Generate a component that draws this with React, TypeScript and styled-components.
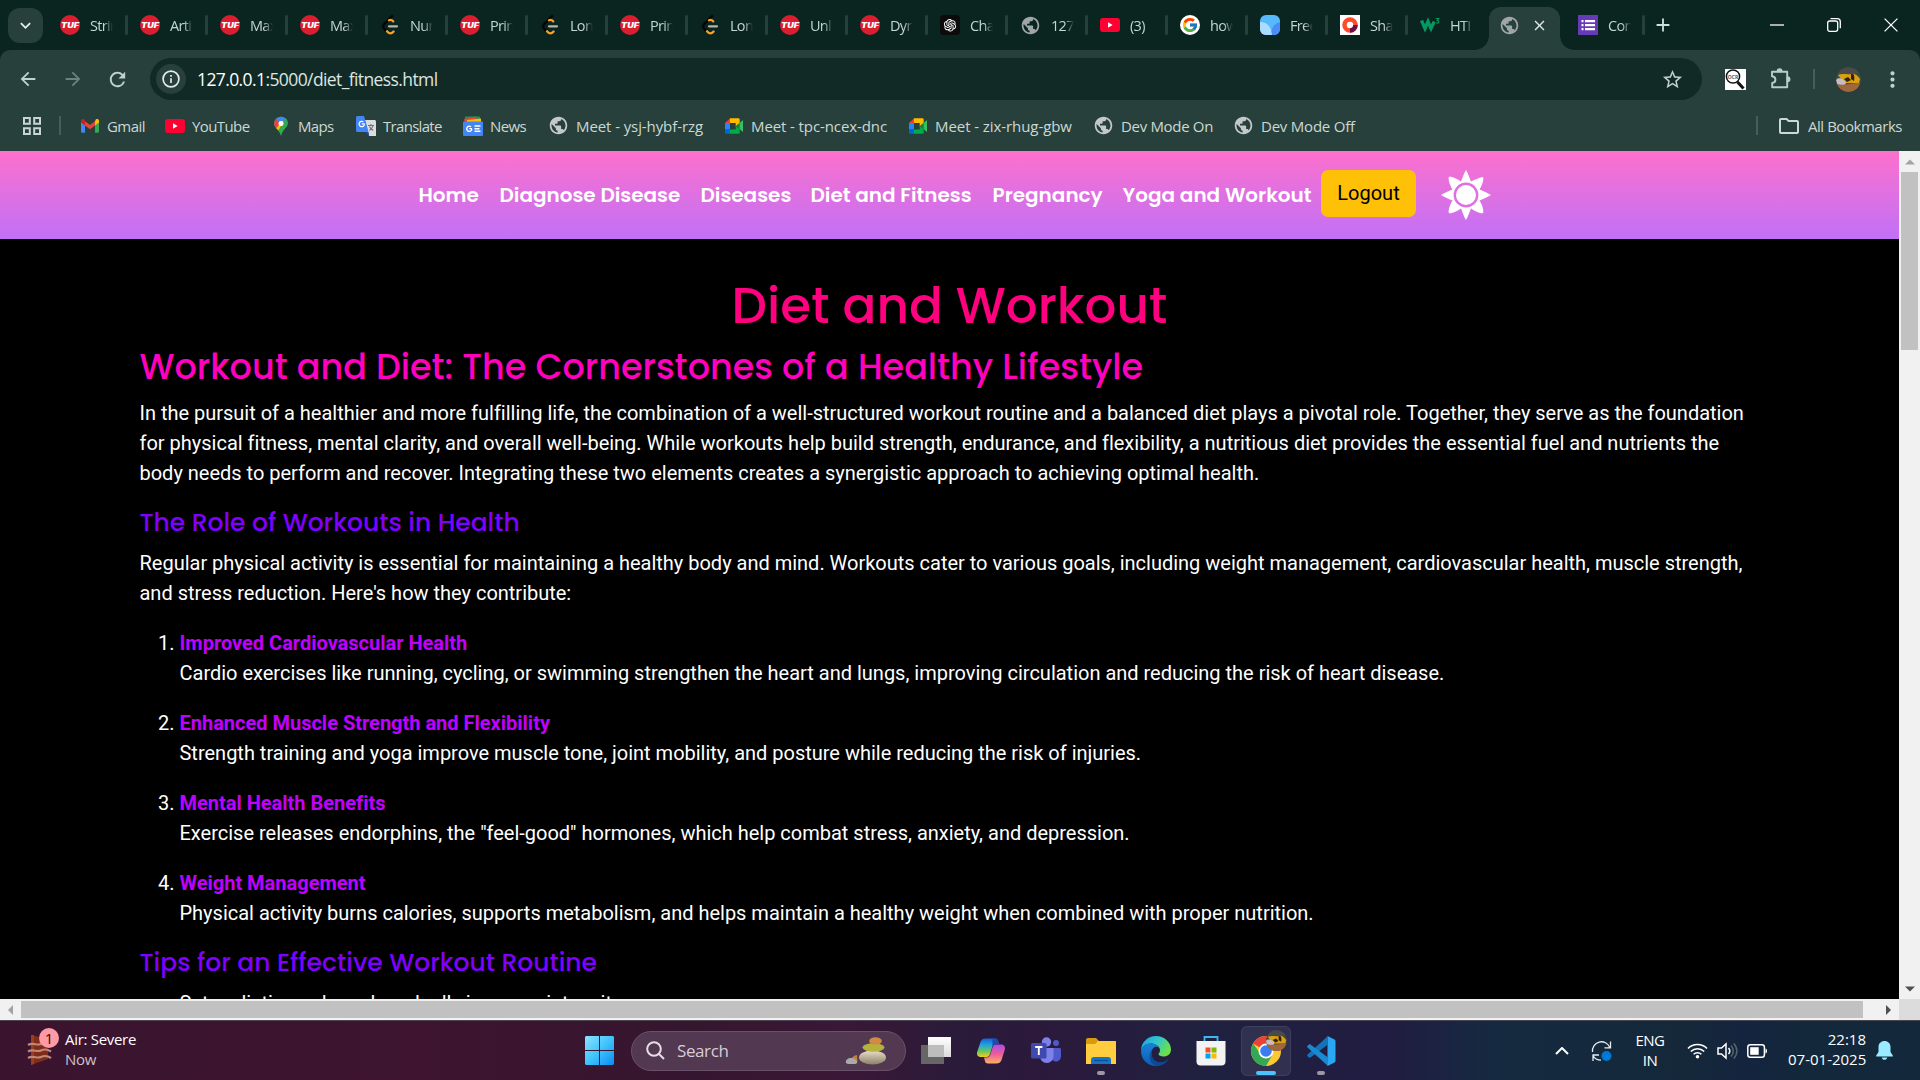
import React from "react";
import styled, { createGlobalStyle } from "styled-components";
import {
  MdPublic, MdArrowBack, MdArrowForward, MdRefresh, MdStarBorder, MdMoreVert,
  MdOutlineFolder, MdKeyboardArrowDown, MdClose, MdAdd,
} from "react-icons/md";
import { FcGoogle } from "react-icons/fc";
import { AiOutlineOpenAI } from "react-icons/ai";

const Global = createGlobalStyle`
  * { box-sizing: border-box; }
  html, body { margin: 0; padding: 0; background: #000; overflow: hidden; }
  svg { display: block; flex: none; }
`;

const ui = `"Segoe UI", "Open Sans", "Noto Sans", sans-serif`;
const display = `"Poppins", "Inter", sans-serif`;

const Screen = styled.div`
  width: 1920px;
  height: 1080px;
  display: flex;
  flex-direction: column;
  overflow: hidden;
  font-family: ${ui};
`;

/* ---------- tab strip ---------- */
const TabStrip = styled.div`
  height: 50px;
  flex: none;
  display: flex;
  background: #0a2420;
  padding-left: 8px;
`;
const TabSearch = styled.div`
  width: 35px;
  height: 35px;
  margin: 8px 3px 0 0;
  border-radius: 12px;
  background: #28403b;
  color: #e4efeb;
  display: flex;
  align-items: center;
  justify-content: center;
`;
const Tab = styled.div<{ $line?: boolean }>`
  width: 80px;
  height: 50px;
  padding-left: 14px;
  display: flex;
  align-items: center;
  gap: 10px;
  position: relative;
  color: #c3d6d0;
  &::after {
    content: "";
    display: ${(p) => (p.$line === false ? "none" : "block")};
    position: absolute;
    right: -2px;
    top: 15px;
    width: 3px;
    height: 20px;
    border-radius: 2px;
    background: #28403b;
  }
`;
const TabTitle = styled.span`
  width: 23px;
  overflow: hidden;
  white-space: nowrap;
  font-size: 14.5px;
  letter-spacing: -0.7px;
  mask-image: linear-gradient(90deg, #000 60%, transparent 100%);
`;
const ActiveTab = styled.div`
  width: 71px;
  height: 43px;
  margin: 7px 17px 0 3px;
  padding: 0 12px 7px 10px;
  display: flex;
  align-items: center;
  justify-content: space-between;
  border-radius: 12px 12px 0 0;
  background: #28403b;
  color: #dfe9e6;
  position: relative;
  &::before, &::after {
    content: "";
    position: absolute;
    bottom: 0;
    width: 14px;
    height: 14px;
  }
  &::before { left: -14px; background: radial-gradient(circle at 0 0, transparent 13.5px, #28403b 14px); }
  &::after { right: -14px; background: radial-gradient(circle at 100% 0, transparent 13.5px, #28403b 14px); }
`;
const LastTab = styled(Tab)`
  width: 66px;
  padding-left: 1px;
`;
const NewTab = styled.div`
  width: 40px;
  height: 50px;
  display: flex;
  align-items: center;
  justify-content: center;
  color: #cfe0db;
`;
const WindowButtons = styled.div`
  margin: 0 1px 0 auto;
  display: flex;
  height: 50px;
  align-items: center;
`;
const WindowButton = styled.div`
  width: 57px;
  display: flex;
  justify-content: center;
`;

/* ---------- toolbar ---------- */
const ToolbarBack = styled.div`
  background: #0a2420;
  flex: none;
`;
const Toolbar = styled.div`
  height: 101px;
  background: #28403b;
  border-radius: 10px 10px 0 0;
`;
const AddressRow = styled.div`
  height: 58px;
  padding: 0 5px 0 5px;
  display: flex;
  align-items: center;
`;
const NavButton = styled.div<{ $dim?: boolean }>`
  width: 45px;
  display: flex;
  justify-content: center;
  color: ${(p) => (p.$dim ? "#6c827c" : "#bdd3cc")};
`;
const Omnibox = styled.div`
  width: 1552px;
  height: 42px;
  margin-left: 10px;
  padding: 0 18px 0 6px;
  border-radius: 21px;
  background: #122a26;
  display: flex;
  align-items: center;
`;
const SiteInfo = styled.div`
  width: 30px;
  height: 30px;
  border-radius: 50%;
  background: #28403b;
  display: flex;
  align-items: center;
  justify-content: center;
`;
const Url = styled.div`
  flex: 1;
  padding-left: 11px;
  font-size: 17.5px;
  letter-spacing: -0.6px;
  color: #dbe6e3;
  b { font-weight: 400; color: #fff; }
`;
const Extensions = styled.div`
  margin: 0 20px 0 auto;
  display: flex;
  align-items: center;
  svg + svg { margin-left: 23px; }
`;
const ToolbarLine = styled.div<{ $h: number }>`
  width: 2px;
  height: ${(p) => p.$h}px;
  background: #465e58;
`;
const Avatar = styled.div`
  width: 25px;
  height: 25px;
  margin: 0 9px 0 21px;
  border-radius: 50%;
  overflow: hidden;
`;

const BookmarkRow = styled.div`
  height: 35px;
  display: flex;
  align-items: center;
  padding: 0 18px 0 23px;
  font-size: 15px;
  color: #cbd8d4;
`;
const BookmarkLine = styled(ToolbarLine)`
  margin: 0 19px 0 18px;
`;
const Bookmark = styled.div<{ $w?: number; $ls: number }>`
  ${(p) => (p.$w ? `width: ${p.$w}px;` : "")}
  display: flex;
  align-items: center;
  gap: 7px;
  line-height: 18px;
  white-space: nowrap;
  letter-spacing: ${(p) => p.$ls}px;
`;
const AllBookmarks = styled.div`
  margin-left: auto;
  display: flex;
  align-items: center;
`;

/* ---------- page ---------- */
const Viewport = styled.div`
  height: 869px;
  flex: none;
  display: grid;
  grid-template-columns: 1899px 21px;
  grid-template-rows: 848px 21px;
`;
const Page = styled.div`
  background: #000;
  color: #fff;
  overflow: hidden;
  font-family: "Roboto", sans-serif;
  font-size: 20px;
  line-height: 30px;
  letter-spacing: -0.007px;
`;
const Header = styled.header`
  height: 88px;
  padding: 0 0 0 409px;
  display: flex;
  align-items: center;
  background: linear-gradient(#fd70cd, #c170f7);
`;
const NavLink = styled.a<{ $w: number }>`
  width: ${(p) => p.$w}px;
  padding-left: 9.5px;
  font-family: ${display};
  font-weight: 600;
  font-size: 20px;
  white-space: nowrap;
  color: #fff;
`;
const Logout = styled.button`
  width: 95px;
  height: 47px;
  margin: 0 25px 3px 0;
  padding: 0 0 1px;
  border: 0;
  border-radius: 7px;
  background: #ffc107;
  color: #000;
  font: 400 20px "Roboto", sans-serif;
`;
const Content = styled.main`
  width: 1620px;
  margin: 0 auto;
  padding-top: 36.5px;
`;
const Title = styled.h1`
  margin: 0 0 10px;
  font: 500 50px/60px ${display};
  text-align: center;
  color: #ff007f;
`;
const SubTitle = styled.h2`
  margin: 0 0 10px;
  font: 500 35px/42px ${display};
  color: #ff00bf;
`;
const SectionTitle = styled.h3`
  margin: 0 0 10px;
  font: 500 25px/30px ${display};
  color: #7f00ff;
`;
const Paragraph = styled.p`
  margin: 0 0 20px;
`;
const Numbered = styled.ol`
  margin: 0;
  padding-left: 40px;
`;
const Bulleted = styled.ul`
  margin: 0;
  padding-left: 40px;
`;
const Item = styled.li`
  margin-bottom: 20px;
  strong { display: block; color: #bf00ff; font-weight: 700; }
`;

/* ---------- scrollbars ---------- */
const VScroll = styled.div`
  background: #f1f1f1;
  display: flex;
  flex-direction: column;
  align-items: center;
  justify-content: space-between;
`;
const HScroll = styled.div`
  background: #f1f1f1;
  display: flex;
  align-items: center;
  justify-content: space-between;
`;
const ArrowBox = styled.div`
  width: 21px;
  height: 21px;
  display: flex;
  align-items: center;
  justify-content: center;
`;
const VThumb = styled.div`
  width: 17px;
  height: 178px;
  margin-bottom: auto;
  background: #c1c1c1;
`;
const HThumb = styled.div`
  width: 1842px;
  height: 17px;
  margin-right: auto;
  background: #c1c1c1;
`;
const Corner = styled.div`
  background: #dcdcdc;
`;

/* ---------- taskbar ---------- */
const Taskbar = styled.div`
  height: 60px;
  flex: none;
  display: flex;
  align-items: center;
  padding: 0 27px 0 26px;
  border-top: 1px solid #4a4753;
  background: linear-gradient(90deg, #3a142f 0, #3e1430 22%, #35162f 36%, #3a1736 44%, #2a1b3a 50%, #2c193c 54%, #1f2140 63%, #211c42 72%, #152a40 78%, #14283a 88%, #14243f 91%, #13283a 94%);
  color: #fff;
  font-size: 15px;
`;
const Weather = styled.div`
  width: 555px;
  display: flex;
  align-items: center;
  gap: 13px;
  line-height: 20px;
  letter-spacing: -0.3px;
`;
const WeatherText = styled.div`
  padding-bottom: 3px;
`;
const WeatherIcon = styled.div`
  position: relative;
  width: 26px;
  height: 32px;
  margin-bottom: 2px;
`;
const Badge = styled.span`
  position: absolute;
  left: 13px;
  top: -6px;
  width: 20px;
  height: 20px;
  border-radius: 50%;
  background: #ff99a4;
  color: #1d0f12;
  text-align: center;
  line-height: 20px;
`;
const Muted = styled.div`
  color: #cfc0cb;
`;
const AppSlot = styled.div<{ $active?: boolean }>`
  width: 50px;
  height: 50px;
  margin-right: 5px;
  display: flex;
  align-items: center;
  justify-content: center;
  position: relative;
  border-radius: 6px;
  background: ${(p) => (p.$active ? "rgba(255,255,255,0.08)" : "transparent")};
  box-shadow: ${(p) => (p.$active ? "inset 0 0 0 1px rgba(255,255,255,0.07)" : "none")};
`;
const StartSlot = styled.div`
  width: 50px;
  display: flex;
  justify-content: flex-start;
  padding-left: 4px;
`;
const RunMark = styled.i<{ $wide?: boolean }>`
  position: absolute;
  bottom: 1px;
  left: 50%;
  width: ${(p) => (p.$wide ? 20 : 8)}px;
  height: 4px;
  border-radius: 2px;
  transform: translateX(-50%);
  background: ${(p) => (p.$wide ? "#4cc2ff" : "#9c98a8")};
`;
const SearchPill = styled.div`
  width: 275px;
  height: 40px;
  margin-right: 5px;
  padding: 0 18px 0 14px;
  display: flex;
  align-items: center;
  border-radius: 20px;
  background: #523850;
  border: 1px solid #6a5068;
  color: #d9ccd8;
  font-size: 17px;
  letter-spacing: -0.4px;
  span { flex: 1; padding-left: 12px; }
`;
const Tray = styled.div`
  margin-left: auto;
  display: flex;
  align-items: center;
  line-height: 20px;
`;
const TrayIcons = styled.div<{ $gap: number }>`
  display: flex;
  align-items: center;
  gap: ${(p) => p.$gap}px;
`;
const Language = styled.div`
  width: 40px;
  margin: 0 17px 2px 18px;
  text-align: center;
  letter-spacing: -0.5px;
`;
const Clock = styled.div`
  margin: 0 10px 3px 20px;
  text-align: right;
  width: 78px;
  white-space: nowrap;
`;

/* ---------- favicons ---------- */
const Tuf = () => (
  <svg width="20" height="20" viewBox="0 0 20 20">
    <circle cx="10" cy="10" r="10" fill="#d71f30" />
    <text x="10" y="12.6" textAnchor="middle" fontFamily="Inter, sans-serif" fontSize="7" fontWeight="900" fontStyle="italic" fill="#fff" textLength="18" lengthAdjust="spacingAndGlyphs">TUF</text>
  </svg>
);
const Leet = () => (
  <svg width="20" height="20" viewBox="0 0 20 20" fill="none" strokeWidth="2.3" strokeLinecap="round">
    <path d="M12 1.200 4 9.300c-1.300 1.300-1.300 2.900 0 4.200l2.300 2.400" stroke="#030303" />
    <path d="M9 5.200c1.700-.8 3-.4 4.300 1.200M7 16.300c2 2.600 4.500 2.600 6.600.2" stroke="#ffa116" />
    <path d="M9 11.300h8" stroke="#b3b3b3" />
  </svg>
);
const YouTube = () => (
  <svg width="20" height="20" viewBox="0 0 20 20">
    <rect x="0" y="3" width="20" height="14" rx="3" fill="#ff0033" />
    <path d="M8 7.200v5.600l4.600-2.800z" fill="#fff" />
  </svg>
);
const Gpt = () => (
  <svg width="20" height="20" viewBox="0 0 20 20">
    <rect width="20" height="20" rx="4" fill="#0b0b0b" />
    <g transform="translate(2 2)" color="#fff"><AiOutlineOpenAI size={16} /></g>
  </svg>
);
const GoogleIcon = () => (
  <svg width="20" height="20" viewBox="0 0 20 20">
    <circle cx="10" cy="10" r="10" fill="#fff" />
    <g transform="translate(1.500 1.500)"><FcGoogle size={17} /></g>
  </svg>
);
const BlueLeaf = () => (
  <svg width="20" height="20" viewBox="0 0 20 20">
    <rect width="20" height="20" rx="6" fill="#56b9fb" />
    <path d="M0 7c7 0 11 4 12 13H6a6 6 0 0 1-6-6z" fill="#a9dcff" />
    <path d="M11.500 16c1-5 4-8 8.500-9v7a6 6 0 0 1-6 6h-2z" fill="#4a8df6" />
  </svg>
);
const Share = () => (
  <svg width="20" height="20" viewBox="0 0 20 20">
    <path fill="#fff" d="M0 0h20v20H0z" />
    <circle cx="10" cy="10" r="5.500" fill="none" stroke="#ff4b2b" strokeWidth="4.500" />
    <path d="M10 15.500a5.500 5.500 0 0 0 5.500-5.500" fill="none" stroke="#6b1044" strokeWidth="4.500" />
  </svg>
);
const W3 = () => (
  <svg width="20" height="20" viewBox="0 0 20 20" fill="none" stroke="#059862">
    <path d="M1.500 5.500 5 13.500l3-7 3 7 3.200-7" strokeWidth="3.300" />
    <path d="M15.800 3.500h3l-1.600 2c2.600.2 2 3.200-.9 2.400" strokeWidth="1.200" />
  </svg>
);
const Forms = () => (
  <svg width="20" height="20" viewBox="0 0 20 20">
    <path fill="#673ab7" d="M0 0h20v20H0z" />
    <path d="M3.500 5h2v2.200h-2zm3.500 0h10v2.200H7zM3.500 9h2v2.200h-2zM7 9h10v2.200H7zm-3.500 4h2v2.200h-2zM7 13h10v2.200H7z" fill="#fff" />
  </svg>
);
const Gmail = () => (
  <svg width="20" height="20" viewBox="0 0 20 20">
    <path d="M1 5v10.500c0 .8.600 1.200 1.200 1.200H5V8z" fill="#4285f4" />
    <path d="M19 5v10.500c0 .8-.6 1.200-1.200 1.200H15V8z" fill="#34a853" />
    <path d="M15 5.500V9.500l4-3V5c0-2-2-2.500-3.300-1.500z" fill="#fbbc04" />
    <path d="M5 9.500V5.300l5 3.800 5-3.800v4.200l-5 3.800z" fill="#ea4335" />
    <path d="M1 5v1.500l4 3V4.300l-.7-.8C3 2.500 1 3 1 5z" fill="#c5221f" />
  </svg>
);
const MapPin = () => (
  <svg width="20" height="20" viewBox="0 0 20 20">
    <path d="M3.200 7.500a6.800 6.800 0 0 1 13.600 0c0 4-4.800 5.500-6.800 12.300C9 14.500 3.200 12 3.200 7.500z" fill="#34a853" />
    <path d="M10 .7a6.800 6.800 0 0 1 6 3.600L5.200 12C4 10.800 3.200 9.300 3.200 7.500A6.800 6.800 0 0 1 10 .7z" fill="#4285f4" />
    <path d="M5 3 10 7.200 5.300 12.300C4 10.800 3.200 9.300 3.200 7.500c0-1.900.6-3.300 1.800-4.500z" fill="#ea4335" />
    <path d="m5.200 12.200 6.600-7.700 2.300 6.200c-1.600 1.700-3.100 3.100-3.800 5.300-1.300-1.200-3.900-2.500-5.100-3.800z" fill="#fbbc04" />
    <path d="M14.300 2.200c3 2 3.600 6-.2 9C12 13 10.600 15 10 19.800c-.5-2.300-1.200-3.600-2.600-5.200z" fill="#34a853" />
    <circle cx="10" cy="7.400" r="2.500" fill="#fff" />
  </svg>
);
const TranslateIcon = () => (
  <svg width="20" height="20" viewBox="0 0 20 20">
    <path d="M9 4h9.500c.8 0 1.500.7 1.500 1.500V20h-7z" fill="#dcdcdc" />
    <path d="M1.500 0H8l4.500 16H1.500C.7 16 0 15.300 0 14.500v-13C0 .7.700 0 1.500 0z" fill="#4285f4" />
    <path d="M9 16h3.500l.6 4z" fill="#174ea6" />
    <path d="M8.600 7.800H5.800M7.400 5.800a2.700 2.700 0 1 0 1.100 2.500" fill="none" stroke="#fff" strokeWidth="1.200" />
    <path d="M12 9.500h6M15 8v1.500m2 0c-.5 2.500-2 4-3.500 5m0-4c.8 1.500 2 3 3.700 4" fill="none" stroke="#6b7280" strokeWidth="1.100" />
  </svg>
);
const NewsIcon = () => (
  <svg width="20" height="20" viewBox="0 0 20 20">
    <path d="M2 .5h15v6H2z" fill="#0c9d58" />
    <path d="m1 3 12-2.500 1.500 5L2 8z" fill="#ea4335" />
    <path d="m4 4 14-1.500v5H4z" fill="#fbbc04" />
    <rect y="5.500" width="20" height="14.500" rx="1" fill="#4285f4" />
    <path d="M9 12.600H6.300M8 10.800a2.600 2.600 0 1 0 .9 2.300" fill="none" stroke="#fff" strokeWidth="1.400" />
    <path d="M11.500 10h6M11.500 12.700h5M11.500 15.300h6" stroke="#fff" strokeWidth="1.500" />
  </svg>
);
const MeetIcon = () => (
  <svg width="20" height="20" viewBox="0 0 20 20">
    <path d="M1 7 6 2.200V7z" fill="#ea4335" />
    <path d="M1 7h5v6.500H1z" fill="#2684fc" />
    <path d="M1 13.500h5v4.300H2.500c-.8 0-1.500-.6-1.500-1.300z" fill="#0066da" />
    <path d="M6 2.200h8.200c.9 0 1.500.6 1.500 1.400V10l-4 .2V7H6z" fill="#ffba00" />
    <path d="M6 13.500h5.700v-3.400l4 3v3.300c0 .8-.6 1.400-1.500 1.400H6z" fill="#00ac47" />
    <path d="m11.700 10.100 7.300-6v12z" fill="#188038" />
    <path d="m15.700 7 3.300-2.800v11.700l-3.300-2.800z" fill="#34c061" />
  </svg>
);
const Globe = () => <MdPublic size={21} color="#9fa5a9" />;
const BookmarkGlobe = () => <MdPublic size={21} color="#c4c8cc" />;

const Photo = ({ size }: { size: number }) => (
  <svg width={size} height={size} viewBox="0 0 25 25">
    <circle cx="12.500" cy="12.500" r="12.500" fill="#4a4a4c" />
    <path d="M1.500 7h22v4h-22z" fill="#3c4a34" />
    <path d="M2 8c5-2 9 0 13-1s7 2 9 5l-1 4H8z" fill="#d9a012" />
    <path d="M15 7c3-1 4 3 3 7l-3-2zM8 12l4-2 3 3-4 2z" fill="#30201a" />
    <path d="M0 13c2-3 6-2 9 1l1 3c-3 2-7 1-9 0z" fill="#c5bcc6" />
    <path d="M1 17c7 2 15-1 23-1-1 5-5 9-11.500 9S2 21 1 17z" fill="#a0683a" />
  </svg>
);

type TabInfo = [React.FC, string];
const tabs: TabInfo[] = [
  [Tuf, "Strin"], [Tuf, "Arti"], [Tuf, "Max"], [Tuf, "Max"], [Leet, "Num"], [Tuf, "Prin"],
  [Leet, "Lon"], [Tuf, "Prin"], [Leet, "Lon"], [Tuf, "Unl"], [Tuf, "Dyn"], [Gpt, "Cha"],
  [Globe, "127"], [YouTube, "(3)"], [GoogleIcon, "how"], [BlueLeaf, "Free"], [Share, "Sha"], [W3, "HTI"],
];

type Mark = [React.FC, string, number, number];
const bookmarks: Mark[] = [
  [Gmail, "Gmail", 85, -0.54],
  [YouTube, "YouTube", 106, -0.6],
  [MapPin, "Maps", 85, -0.7],
  [TranslateIcon, "Translate", 107, -0.7],
  [NewsIcon, "News", 85, -0.62],
  [BookmarkGlobe, "Meet - ysj-hybf-rzg", 176, -0.09],
  [MeetIcon, "Meet - tpc-ncex-dnc", 184, -0.1],
  [MeetIcon, "Meet - zix-rhug-gbw", 185, -0.07],
  [BookmarkGlobe, "Dev Mode On", 140, -0.32],
  [BookmarkGlobe, "Dev Mode Off", 140, -0.22],
];

const items = [
  ["Improved Cardiovascular Health", "Cardio exercises like running, cycling, or swimming strengthen the heart and lungs, improving circulation and reducing the risk of heart disease."],
  ["Enhanced Muscle Strength and Flexibility", "Strength training and yoga improve muscle tone, joint mobility, and posture while reducing the risk of injuries."],
  ["Mental Health Benefits", "Exercise releases endorphins, the \"feel-good\" hormones, which help combat stress, anxiety, and depression."],
  ["Weight Management", "Physical activity burns calories, supports metabolism, and helps maintain a healthy weight when combined with proper nutrition."],
];

const Browser = () => (
  <>
    <TabStrip>
      <TabSearch><MdKeyboardArrowDown size={21} /></TabSearch>
      {tabs.map(([Icon, title], i) => (
        <Tab key={i} $line={i < tabs.length - 1}>
          <Icon />
          <TabTitle>{title}</TabTitle>
        </Tab>
      ))}
      <ActiveTab>
        <Globe />
        <MdClose size={17} />
      </ActiveTab>
      <LastTab>
        <Forms />
        <TabTitle>Con</TabTitle>
      </LastTab>
      <NewTab><MdAdd size={22} /></NewTab>
      <WindowButtons>
        <WindowButton>
          <svg width="14" height="14"><path d="M0 7h14" stroke="#fff" strokeWidth="1.300" /></svg>
        </WindowButton>
        <WindowButton>
          <svg width="14" height="14" fill="none" stroke="#fff" strokeWidth="1.300"><rect x=".7" y="3" width="10" height="10.300" rx="2" /><path d="M3.500.7h6.800c1.800 0 3 1.200 3 3v6.500" /></svg>
        </WindowButton>
        <WindowButton>
          <svg width="14" height="14"><path d="m.6.600 12.800 12.800M13.400.6.600 13.400" stroke="#fff" strokeWidth="1.300" /></svg>
        </WindowButton>
      </WindowButtons>
    </TabStrip>
    <ToolbarBack>
      <Toolbar>
        <AddressRow>
          <NavButton><MdArrowBack size={22} /></NavButton>
          <NavButton $dim><MdArrowForward size={22} /></NavButton>
          <NavButton><MdRefresh size={23} /></NavButton>
          <Omnibox>
            <SiteInfo>
              <svg width="18" height="18" fill="none" stroke="#e3ecea" strokeWidth="1.700"><circle cx="9" cy="9" r="7.900" /><path d="M9 8.200v4.800M9 5v1.800" /></svg>
            </SiteInfo>
            <Url><b>127.0.0.1</b>:5000/diet_fitness.html</Url>
            <MdStarBorder size={23} color="#c3cfcc" />
          </Omnibox>
          <Extensions>
            <svg width="21" height="21" viewBox="0 0 21 21" fill="none">
              <path fill="#fff" d="M0 0h21v21H0z" />
              <circle cx="8" cy="7.500" r="6.600" stroke="#111" strokeWidth="1.500" />
              <path d="m12.500 13 6 6.500" stroke="#111" strokeWidth="3" />
              <text x="8" y="9.500" textAnchor="middle" fontFamily="Open Sans, sans-serif" fontSize="5" fontWeight="600" fill="#333">OCR</text>
            </svg>
            <svg width="24" height="24" viewBox="0 0 24 24" fill="none" stroke="#b4d0c8" strokeWidth="1.900" strokeLinejoin="round">
              <path d="M3 4.800h15.200v15.400H3.200v-4.300c4.300-.4 4.300-6.200-.2-6.600z" />
              <path d="M8.600 4.300a2 2 0 0 1 4 0zM18.500 10.300a2 2 0 0 1 0 4z" fill="#b4d0c8" />
            </svg>
          </Extensions>
          <ToolbarLine $h={20} />
          <Avatar><Photo size={25} /></Avatar>
          <NavButton><MdMoreVert size={25} /></NavButton>
        </AddressRow>
        <BookmarkRow>
          <svg width="18" height="18" fill="none" stroke="#c9d5d1" strokeWidth="2"><path d="M1 1h5.800v5.800H1zM11.200 1H17v5.800h-5.800zM1 11.200h5.800V17H1zM11.200 11.200H17V17h-5.800z" /></svg>
          <BookmarkLine $h={19} />
          {bookmarks.map(([Icon, name, w, ls]) => (
            <Bookmark key={name} $w={w} $ls={ls}><Icon />{name}</Bookmark>
          ))}
          <AllBookmarks>
            <BookmarkLine $h={19} />
            <Bookmark $ls={-0.46}><MdOutlineFolder size={24} />All Bookmarks</Bookmark>
          </AllBookmarks>
        </BookmarkRow>
      </Toolbar>
    </ToolbarBack>
  </>
);

const Arrow = ({ d, color = "#505050" }: { d: string; color?: string }) => (
  <ArrowBox><svg width="10" height="10" viewBox="0 0 10 10"><path d={d} fill={color} /></svg></ArrowBox>
);

const Website = () => (
  <Viewport>
    <Page>
      <Header>
        <NavLink $w={81}>Home</NavLink>
        <NavLink $w={201}>Diagnose Disease</NavLink>
        <NavLink $w={110}>Diseases</NavLink>
        <NavLink $w={182}>Diet and Fitness</NavLink>
        <NavLink $w={130}>Pregnancy</NavLink>
        <NavLink $w={208}>Yoga and Workout</NavLink>
        <Logout>Logout</Logout>
        <svg width="50" height="50" viewBox="0 0 50 50">
          <path d="M25 0c1.500 2 3.500 8 5 11.500C33 10 38 7.500 42 7c1 1 0 7-3.500 12.500C42 21 48 23.500 50 25c-2 1.500-8 4-11.500 5.500C42 36 43 42 42 43c-1 1-7-1-12-4.500C28.500 42 26.500 48 25 50c-1.500-2-3.500-8-5-11.500C15 42 9 44 8 43s0-7 3.500-12.500C8 29 2 26.500 0 25c2-1.500 8-4 11.500-5.500C8 14 7 8 8 7s7 1 12 4.500C21.500 8 23.500 2 25 0z" fill="#fff" />
          <circle cx="25" cy="25" r="11.200" fill="none" stroke="#dd70e2" strokeWidth="2.400" />
        </svg>
      </Header>
      <Content>
        <Title>Diet and Workout</Title>
        <SubTitle>Workout and Diet: The Cornerstones of a Healthy Lifestyle</SubTitle>
        <Paragraph>
          In the pursuit of a healthier and more fulfilling life, the combination of a well-structured workout routine and a balanced diet plays a pivotal role. Together, they serve as the foundation for physical fitness, mental clarity, and overall well-being. While workouts help build strength, endurance, and flexibility, a nutritious diet provides the essential fuel and nutrients the body needs to perform and recover. Integrating these two elements creates a synergistic approach to achieving optimal health.
        </Paragraph>
        <SectionTitle>The Role of Workouts in Health</SectionTitle>
        <Paragraph>
          Regular physical activity is essential for maintaining a healthy body and mind. Workouts cater to various goals, including weight management, cardiovascular health, muscle strength, and stress reduction. Here's how they contribute:
        </Paragraph>
        <Numbered>
          {items.map(([head, body]) => (
            <Item key={head}><strong>{head}</strong>{body}</Item>
          ))}
        </Numbered>
        <SectionTitle>Tips for an Effective Workout Routine</SectionTitle>
        <Bulleted>
          <li>Set realistic goals and gradually increase intensity.</li>
        </Bulleted>
      </Content>
    </Page>
    <VScroll>
      <Arrow d="M0 7.500h10L5 2.500z" color="#a3a3a3" />
      <VThumb />
      <Arrow d="M0 2.500h10L5 7.500z" />
    </VScroll>
    <HScroll>
      <Arrow d="M7 0v10L2 5z" color="#a3a3a3" />
      <HThumb />
      <Arrow d="M2 0v10l5-5z" />
    </HScroll>
    <Corner />
  </Viewport>
);

const Apps = () => (
  <>
    <AppSlot>
      <svg width="30" height="30" viewBox="0 0 30 30">
        <defs><linearGradient id="tv" x1="0" y1="0" x2="0" y2="1"><stop stopColor="#fff" /><stop offset="1" stopColor="#dcdcdc" /></linearGradient></defs>
        <path d="M0 9h23v19H0z" fill="#666" /><path d="M7 1h23v20H7z" fill="url(#tv)" /><path d="M7 9h16v12H7z" fill="#bdbdbd" />
      </svg>
    </AppSlot>
    <AppSlot>
      <svg width="30" height="30" viewBox="0 0 30 30">
        <defs>
          <linearGradient id="cpA" x1="0" y1="0" x2="0" y2="1"><stop stopColor="#1a60d8" /><stop offset=".35" stopColor="#20a5dc" /><stop offset=".7" stopColor="#6fc65a" /><stop offset="1" stopColor="#f2cf1d" /></linearGradient>
          <linearGradient id="cpB" x1="0" y1="0" x2="0" y2="1"><stop stopColor="#a94ee8" /><stop offset=".5" stopColor="#ee5b99" /><stop offset="1" stopColor="#fdb066" /></linearGradient>
        </defs>
        <path d="M10 2.500h9c2 0 2.600 1 3.200 3L23 8h-3c-2.200 0-3.200 1-3.800 3l-2.200 7c-.6 2-1.500 3-3.500 3H5c-3.500 0-4.600-2.500-3.700-5.500L4.500 6c.8-2.400 2.500-3.500 5.500-3.500z" fill="url(#cpA)" />
        <path d="M20 27.500h-8c-2 0-2.800-1-3.200-3L8 21.500h2.500c2.200 0 3.200-1 3.800-3l2.200-7C17.100 9.500 18 8.500 20 8.500h5c3.500 0 4.600 2.500 3.700 5.500l-3.200 10c-.8 2.400-2.500 3.500-5.500 3.500z" fill="url(#cpB)" />
        <path d="M16.500 2.500H19c2 0 2.600 1 3.200 3L23 8h-3c-2 0-3 1-3.600 2.700z" fill="#1c4bb8" />
      </svg>
    </AppSlot>
    <AppSlot>
      <svg width="30" height="30" viewBox="0 0 30 30">
        <circle cx="15.500" cy="6" r="4.700" fill="#7b83eb" /><circle cx="25" cy="7" r="3" fill="#5059c9" />
        <path d="M20 12h8.500c.8 0 1.500.7 1.500 1.500V20c0 3-2 5.500-5 5.500s-5-2.500-5-5z" fill="#5059c9" />
        <path d="M9 12h13.500v8c0 4-3 7-6.800 7S9 24 9 20z" fill="#7b83eb" />
        <rect x="0" y="7" width="15.500" height="15.500" rx="1.500" fill="#4049ad" />
        <path d="M4.200 11h7.200M7.800 11v8" stroke="#fff" strokeWidth="1.900" />
      </svg>
    </AppSlot>
    <AppSlot>
      <svg width="30" height="30" viewBox="0 0 30 30">
        <path d="M0 4c0-1.200.7-2 2-2h8l3 3-3 4H0z" fill="#d99a10" /><path d="M0 8h9l3-3h17c.7 0 1 .3 1 1v22H0z" fill="#ffcd3d" />
        <path d="M5 28v-4c0-1.700 1-3 3-3h14c2 0 3 1.300 3 3v4z" fill="#1374c8" /><path d="M8 24.500h14" stroke="#0b4d91" strokeWidth="1.200" />
      </svg>
      <RunMark />
    </AppSlot>
    <AppSlot>
      <svg width="30" height="30" viewBox="0 0 30 30">
        <defs>
          <linearGradient id="edA" x1="0" y1="0" x2="1" y2=".5"><stop stopColor="#1c9de0" /><stop offset=".5" stopColor="#2fc5d0" /><stop offset="1" stopColor="#6ce04a" /></linearGradient>
          <linearGradient id="edB" x1="0" y1="0" x2="0" y2="1"><stop stopColor="#1783d8" /><stop offset="1" stopColor="#0f5bb5" /></linearGradient>
        </defs>
        <path d="M0 15C0 6 7 0 15 0s15 6 15 13.500c0 4.500-3.500 7-7.500 7-3 0-5-1-5-2.200 0-1 1.500-1.500 1.500-4C19 10 14 7.500 9.500 7.500 4.500 7.500 1 10.500 0 15z" fill="url(#edA)" />
        <path d="M0 15c1-5 4.500-7.500 9.500-7.500 4 0 7 1.500 8.500 4-4-2-7.500 1-7.500 6 0 5.500 4 10.500 10.500 10.500-2 1.300-4 2-6 2C6 30 0 23 0 15z" fill="url(#edB)" />
        <path d="M13 12c-3 2-4 9 1 12.500 4.500 3.200 10.500 2 13.500-2-2 5.500-7.500 7.500-12.500 7.500-5-2-7-7-6-12 .5-3 2-5 4-6z" fill="#0c4a94" />
      </svg>
    </AppSlot>
    <AppSlot>
      <svg width="30" height="30" viewBox="0 0 30 30">
        <path d="M8.500 6V1h13v5" fill="none" stroke="#3fb6ee" strokeWidth="1.800" /><path d="M.5 5h29v20.500c0 2.500-1.500 4-4 4h-21c-2.500 0-4-1.500-4-4z" fill="#f3f3f3" />
        <path d="M9.500 11.500h5v5h-5z" fill="#f25022" /><path d="M15.500 11.500h5v5h-5z" fill="#7fba00" /><path d="M9.500 17.500h5v5h-5z" fill="#00a4ef" /><path d="M15.500 17.500h5v5h-5z" fill="#ffb900" />
      </svg>
    </AppSlot>
    <AppSlot $active>
      <svg width="42" height="42" viewBox="0 0 42 42">
        <circle cx="21" cy="21" r="15" fill="#fcc934" />
        <path d="M21 21 8 13.500A15 15 0 0 1 34 13.500L21 14z" fill="#ea4335" />
        <path d="M8 13.500A15 15 0 0 0 21 36l6-10.500-11-1z" fill="#34a853" />
        <circle cx="21" cy="21" r="7.500" fill="#fff" /><circle cx="21" cy="21" r="5.800" fill="#3b7df0" />
        <g transform="translate(21 0)"><Photo size={21} /></g>
      </svg>
      <RunMark $wide />
    </AppSlot>
    <AppSlot>
      <svg width="30" height="30" viewBox="0 0 30 30">
        <path d="M21.500 0 28.500 3.500c.6.300 1 1 1 1.700v19.600c0 .7-.4 1.400-1 1.700L21.500 30z" fill="#2aa6f2" />
        <path d="M22 0 1.500 18.500c-.5.500-.5 1.200 0 1.700L3 21.500c.4.400 1 .4 1.500.1L22 8.500z" fill="#1173ba" />
        <path d="M22 30 1.500 11.500c-.5-.5-.5-1.200 0-1.700L3 8.500c.4-.4 1-.4 1.500-.1L22 21.500z" fill="#1b88d0" />
      </svg>
      <RunMark />
    </AppSlot>
  </>
);

const Desk = () => (
  <Taskbar>
    <Weather>
      <WeatherIcon>
        <svg width="26" height="32" viewBox="0 0 26 32">
          <path d="M5 1l17 4v20L5 31z" fill="#7d2d19" /><path d="M5 1h3v29l-3 1z" fill="#9a3e22" />
          <path d="M2 11c5-3 9 1 13-1s7-1 10 1M2 17.500c5-3 9 1 13-1s7-1 10 1M2 24c5-3 9 1 13-1s7-1 10 1" fill="none" stroke="#c28877" strokeWidth="2.200" />
        </svg>
        <Badge>1</Badge>
      </WeatherIcon>
      <WeatherText>
        <div>Air: Severe</div>
        <Muted>Now</Muted>
      </WeatherText>
    </Weather>
    <StartSlot>
      <svg width="29" height="29" viewBox="0 0 29 29">
        <defs><linearGradient id="win" x1="0" y1="0" x2="1" y2="1"><stop stopColor="#8fe2ff" /><stop offset=".5" stopColor="#3fc4fb" /><stop offset="1" stopColor="#0a8cf5" /></linearGradient></defs>
        <path d="M1 0h13v14H0V1zM15 0h13l1 1v13H15zM0 15h14v14H1l-1-1zM15 15h14v13l-1 1H15z" fill="url(#win)" />
      </svg>
    </StartSlot>
    <SearchPill>
      <svg width="19" height="19" fill="none" stroke="#e6dde6" strokeWidth="2"><circle cx="8" cy="8" r="6.800" /><path d="m13 13 5 5" /></svg>
      <span>Search</span>
      <svg width="42" height="28" viewBox="0 0 42 28">
        <defs>
          <linearGradient id="stone" x1="0" y1="0" x2="0" y2="1"><stop stopColor="#e9dfca" /><stop offset="1" stopColor="#8d7f68" /></linearGradient>
        </defs>
        <path d="M4 26c2-5 5-8 8-8 0 3 1 6 0 8z" fill="#c07f3a" /><path d="M1 26c-1-3 2-5 5-5s6 2 6 4-1 2-5 2-5 0-6-1z" fill="#a9a9ab" />
        <ellipse cx="27.500" cy="20.500" rx="13.500" ry="7" fill="url(#stone)" /><ellipse cx="28.500" cy="10.500" rx="11" ry="4.200" fill="#b5b23c" /><ellipse cx="30.500" cy="4" rx="6.300" ry="3.800" fill="#d18a44" />
      </svg>
    </SearchPill>
    <Apps />
    <Tray>
      <TrayIcons $gap={22}>
        <svg width="14" height="8" fill="none" stroke="#fff" strokeWidth="2"><path d="m1 7 6-6 6 6" /></svg>
        <svg width="21" height="22" viewBox="0 0 21 22" fill="none" stroke="#e8edf2" strokeWidth="1.300">
          <path d="M1.500 12a9 9 0 0 1 17.300-4.500M19.500 1.500v6.300h-6M2 21v-6h6M2 15.500c1.500 3 4.500 4.700 8 4.700" /><circle cx="15.500" cy="16" r="5" fill="#0078d7" stroke="none" />
        </svg>
      </TrayIcons>
      <Language>ENG<br />IN</Language>
      <TrayIcons $gap={9}>
        <svg width="21" height="16" viewBox="0 0 21 16" fill="none" stroke="#fff" strokeWidth="1.600">
          <path d="M1 5.500a13.400 13.400 0 0 1 19 0M3.800 8.500a9.400 9.400 0 0 1 13.400 0M6.600 11.300a5.500 5.500 0 0 1 7.800 0" /><circle cx="10.500" cy="13.800" r="1.800" fill="#fff" stroke="none" />
        </svg>
        <svg width="21" height="18" viewBox="0 0 21 18" fill="none" stroke="#fff" strokeWidth="1.500">
          <path d="M1 6h3.500L9 2v14l-4.500-4H1zM11.500 6c1.500 1.700 1.500 4.300 0 6" /><path d="M14 3.500c3 3.200 3 7.800 0 11M16.700 1.500c4.200 4.300 4.200 10.700 0 15" stroke="#56646f" />
        </svg>
        <svg width="21" height="14" viewBox="0 0 21 14" fill="none">
          <rect x=".8" y=".8" width="16.600" height="12.400" rx="2.500" stroke="#fff" strokeWidth="1.500" /><path d="M3.200 3.200h8.500v7.600H3.200z" fill="#fff" /><path d="M18.500 4.500c2 .3 2 4.700 0 5z" fill="#fff" />
        </svg>
      </TrayIcons>
      <Clock>22:18<br />07-01-2025</Clock>
      <svg width="17" height="19" viewBox="0 0 17 19" fill="#99ebff"><path d="M8.500 0c3.500 0 6 2.500 6 6v5l2.300 3.500v1H.2v-1L2.500 11V6c0-3.500 2.500-6 6-6zM5.800 16.500h5.400c-.3 1.500-1.300 2.300-2.700 2.300s-2.400-.8-2.700-2.300z" /></svg>
    </Tray>
  </Taskbar>
);

export default function App() {
  return (
    <Screen>
      <Global />
      <Browser />
      <Website />
      <Desk />
    </Screen>
  );
}
